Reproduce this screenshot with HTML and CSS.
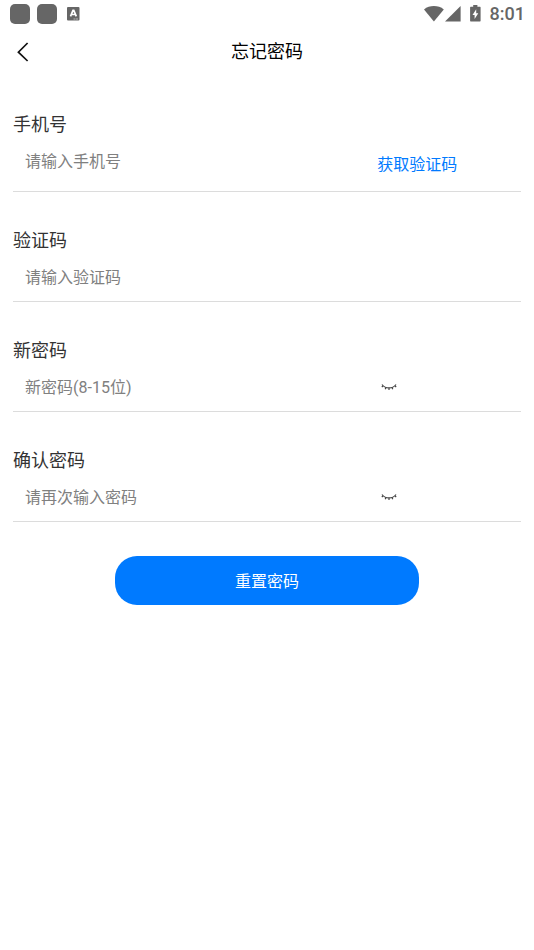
FILE: index.html
```html
<!DOCTYPE html>
<html lang="zh-CN">
<head>
<meta charset="utf-8">
<meta name="viewport" content="width=device-width, initial-scale=1">
<title>忘记密码</title>
<link rel="stylesheet" href="styles.css">
</head>
<body>
<div class="status-bar">
  <div class="status-group">
    <span class="notice"></span>
    <span class="notice"></span>
    <svg class="notice-app" width="13" height="14" viewBox="0 0 13 14" aria-hidden="true">
      <rect width="12.5" height="13.5" rx="1" fill="#666"/>
      <path d="M3.500 9.300 6 3.300h.8l2.500 6M4.600 7.500h3.600" fill="none" stroke="#fff" stroke-width="1.700"/>
      <path d="M6.500 12h5" stroke="#ccc" stroke-width=".8" stroke-dasharray="2 .5"/>
    </svg>
  </div>
  <div class="status-group status-right">
    <svg width="20" height="16" viewBox="0 0 20 16" aria-hidden="true"><path d="M0 3.4C5.6-1 14.2-1 19.8 3.4L9.9 15.6Z" fill="#666"/></svg>
    <svg width="16" height="16" viewBox="0 0 16 16" aria-hidden="true"><path d="M15.6 0v15.600H0Z" fill="#666"/></svg>
    <svg class="battery" width="11" height="17" viewBox="0 0 11 17" aria-hidden="true">
      <path d="M3.2 0h4.2v1.8H10a.6.6 0 0 1 .6.6v13.4a.6.6 0 0 1-.6.6H.7a.6.6 0 0 1-.6-.6V2.400a.6.6 0 0 1 .6-.6h2.500Z" fill="#666"/>
      <path d="M6.200 4.300 2.500 10h2.100v4L8.300 8.300H6.200Z" fill="#fff"/>
    </svg>
    <span class="clock">8:01</span>
  </div>
</div>
<header class="nav">
  <button class="back" type="button" aria-label="返回">
    <svg width="12" height="20" viewBox="0 0 12 20" aria-hidden="true"><path d="M10.600 1 1.400 10.200l9.200 8.800" fill="none" stroke="#111" stroke-width="1.700"/></svg>
  </button>
  <h1 class="title">忘记密码</h1>
</header>
<form class="form">
  <div class="field field-first">
    <label class="label" for="phone">手机号</label>
    <div class="row">
      <input class="input" id="phone" type="tel" placeholder="请输入手机号">
      <button class="code" type="button">获取验证码</button>
    </div>
  </div>
  <div class="field">
    <label class="label" for="code">验证码</label>
    <div class="row">
      <input class="input" id="code" type="text" placeholder="请输入验证码">
    </div>
  </div>
  <div class="field">
    <label class="label" for="password">新密码</label>
    <div class="row">
      <input class="input" id="password" type="password" placeholder="新密码(8-15位)">
      <button class="eye" type="button" aria-label="显示密码">
        <svg width="16" height="8" viewBox="0 0 16 8" aria-hidden="true"><path d="M1 1.500c3.500 4.600 10.500 4.600 14 0M2.200 2.800.8 4M5 4.500l-.8 1.700M8 5v2M11 4.500l.8 1.700M13.800 2.800 15.200 4" fill="none" stroke="#444" stroke-width="1.200"/></svg>
      </button>
    </div>
  </div>
  <div class="field">
    <label class="label" for="confirm">确认密码</label>
    <div class="row">
      <input class="input" id="confirm" type="password" placeholder="请再次输入密码">
      <button class="eye" type="button" aria-label="显示密码">
        <svg width="16" height="8" viewBox="0 0 16 8" aria-hidden="true"><path d="M1 1.500c3.500 4.600 10.500 4.600 14 0M2.200 2.800.8 4M5 4.500l-.8 1.700M8 5v2M11 4.500l.8 1.700M13.800 2.800 15.200 4" fill="none" stroke="#444" stroke-width="1.200"/></svg>
      </button>
    </div>
  </div>
  <button class="submit" type="submit">重置密码</button>
</form>
</body>
</html>
```
FILE: styles.css
```css
* {
  box-sizing: border-box;
}

body {
  margin: 0;
  background: #fff;
  color: #333;
  font-family: Roboto, "Noto Sans CJK SC", sans-serif;
}

button,
input {
  margin: 0;
  padding: 0;
  border: 0;
  background: none;
  font: inherit;
}

svg {
  display: block;
}

.status-bar {
  display: flex;
  align-items: center;
  justify-content: space-between;
  height: 27px;
  padding: 0 10px;
}

.status-group {
  display: flex;
  align-items: center;
  gap: 7px;
}

.notice {
  width: 20px;
  height: 20px;
  border-radius: 5px;
  background: #666;
}

.notice-app {
  margin-left: 3px;
}

.status-right {
  gap: 1px;
  margin-right: -1px;
}

.battery {
  margin: 0 8px;
}

.clock {
  color: #666;
  font-size: 18px;
  font-weight: 500;
  line-height: 27px;
}

.nav {
  display: grid;
  grid-template-columns: 48px 1fr 48px;
  align-items: center;
  height: 48px;
}

.back {
  display: flex;
  align-items: center;
  height: 48px;
  padding-left: 17px;
}

.title {
  margin: 0;
  color: #000;
  font-size: 18px;
  font-weight: 400;
  line-height: 50px;
  text-align: center;
}

.form {
  display: flex;
  flex-direction: column;
  padding: 7px 13px;
}

.field {
  height: 110px;
  padding-top: 34px;
  border-bottom: 1px solid #dcdcdc;
}

.field-first {
  padding-top: 28px;
}

.label {
  display: block;
  font-size: 18px;
  line-height: 30px;
}

.row {
  display: flex;
  align-items: center;
  height: 42px;
  padding-left: 12px;
  font-size: 16px;
}

.input {
  flex: 0 0 71%;
  min-width: 0;
  height: 42px;
  outline: 0;
  color: #333;
}

.input::placeholder {
  color: #808080;
  opacity: 1;
}

.code {
  margin-top: 4px;
  color: #007aff;
  white-space: nowrap;
}

.eye {
  padding: 8px 4px;
}

.submit {
  align-self: center;
  width: 60%;
  height: 49px;
  margin-top: 34px;
  padding-bottom: 2px;
  border-radius: 22px;
  background: #007aff;
  color: #fff;
  font-size: 16px;
}
```
